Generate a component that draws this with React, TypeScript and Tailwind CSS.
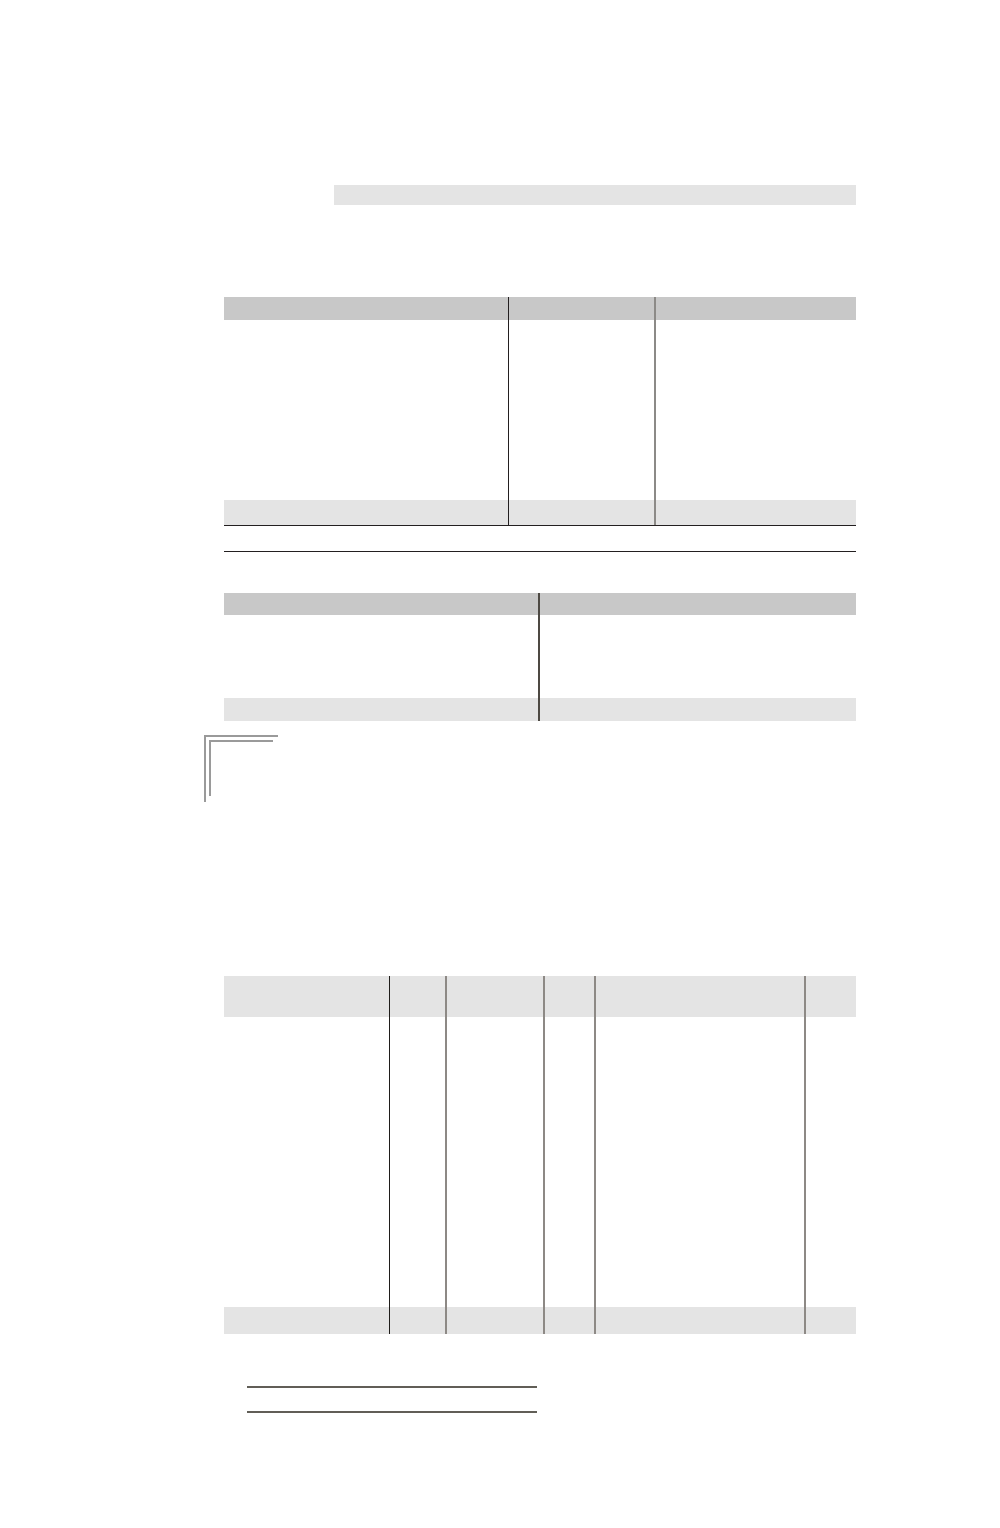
import React from 'react';

type Col = { w: string; line: string };

function Row({ cols, className }: { cols: Col[]; className: string }) {
  return (
    <div className={`flex ${className}`}>
      {cols.map((c, i) => (
        <div key={i} className={`${c.w} ${c.line} shrink-0`} />
      ))}
    </div>
  );
}

const first: Col[] = [
  { w: 'w-[285px]', line: 'border-r border-[#231f20]' },
  { w: 'w-[147px]', line: 'border-r-2 border-[#8c8a87]' },
  { w: 'flex-1', line: '' },
];

const second: Col[] = [
  { w: 'w-[316px]', line: 'border-r-2 border-[#4d4943]' },
  { w: 'flex-1', line: '' },
];

const third: Col[] = [
  { w: 'w-[166px]', line: 'border-r border-[#1f1d1a]' },
  { w: 'w-[57px]', line: 'border-r-2 border-[#8d8985]' },
  { w: 'w-[98px]', line: 'border-r-2 border-[#8d8985]' },
  { w: 'w-[51px]', line: 'border-r-2 border-[#8d8985]' },
  { w: 'w-[210px]', line: 'border-r-2 border-[#8d8985]' },
  { w: 'flex-1', line: '' },
];

export default function App() {
  return (
    <div className="min-h-screen w-full bg-white">
      <div className="ml-[224px] w-[632px] pt-[185px] pb-[114px]">
        {/* title bar */}
        <div className="ml-[110px] h-[20px] bg-[#e4e4e4]" />

        {/* table 1 */}
        <div className="mt-[92px] border-b border-[#231f20]">
          <Row cols={first} className="h-[23px] bg-[#c8c8c8]" />
          <Row cols={first} className="h-[180px] bg-white" />
          <Row cols={first} className="h-[25px] bg-[#e4e4e4]" />
        </div>
        <div className="mt-[25px] h-px bg-[#231f20]" />

        {/* table 2 */}
        <div className="mt-[41px]">
          <Row cols={second} className="h-[22px] bg-[#c8c8c8]" />
          <Row cols={second} className="h-[83px] bg-white" />
          <Row cols={second} className="h-[23px] bg-[#e4e4e4]" />
        </div>

        {/* corner mark */}
        <div className="mt-[14px] -ml-[20px] h-[67px] w-[74px] border-l-2 border-t-2 border-[#9a9a9a]">
          <div className="ml-[3px] mt-[3px] h-[56px] w-[64px] border-l-2 border-t-2 border-[#9a9a9a]" />
        </div>

        {/* table 3 */}
        <div className="mt-[174px]">
          <Row cols={third} className="h-[41px] bg-[#e4e4e4]" />
          <Row cols={third} className="h-[290px] bg-white" />
          <Row cols={third} className="h-[27px] bg-[#e4e4e4]" />
        </div>

        {/* signature lines */}
        <div className="ml-[23px] mt-[52px] w-[290px]">
          <div className="h-[2px] bg-[#615e57]" />
          <div className="mt-[23px] h-[2px] bg-[#615e57]" />
        </div>
      </div>
    </div>
  );
}
